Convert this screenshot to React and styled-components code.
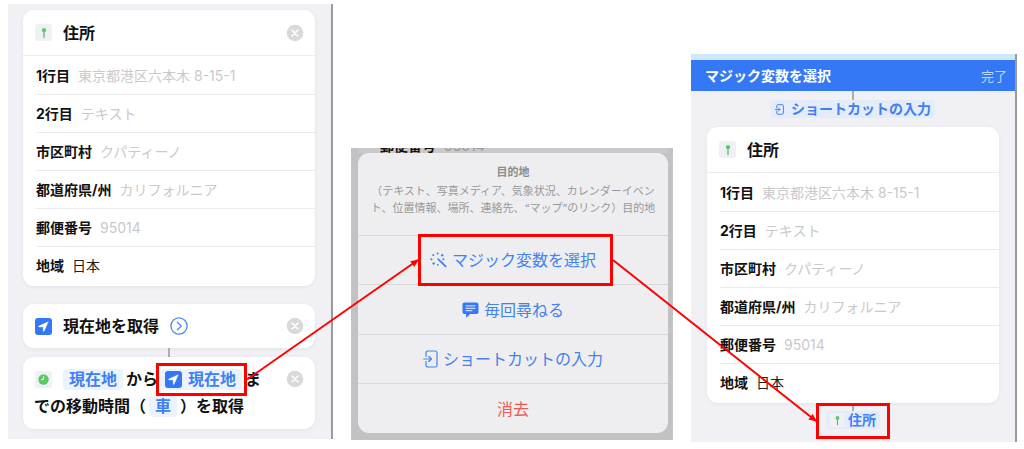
import React, { useLayoutEffect, useRef, useState } from 'react';
import styled, { createGlobalStyle } from 'styled-components';

const GlobalStyle = createGlobalStyle`
    * {
        box-sizing: border-box;
    }

    body {
        margin: 0;
        background: #fff;
        font-family: Inter, "Noto Sans CJK JP", sans-serif;
        font-size: 14px;
        color: #111;
    }

    button, input {
        font: inherit;
        color: inherit;
        border: none;
        background: none;
        padding: 0;
        margin: 0;
    }

    button {
        cursor: pointer;
    }

    svg {
        display: block;
        flex: none;
    }
`;

const Page = styled.main`
    position: relative;
    display: grid;
    grid-template-columns: minmax(0, 325fr) minmax(0, 322fr) minmax(0, 326fr);
    column-gap: 18px;
    align-items: start;
    padding: 0 7px 7px 8px;
`;

const Phone = styled.section`
    margin-top: ${({ $top }) => $top}px;
    background: #f0f0f5;
    border-right: 2px solid #9b9b9f;
`;

const PhoneBody = styled.div`
    display: flex;
    flex-direction: column;
    padding: ${({ $pad }) => $pad};
`;

const Card = styled.div`
    background: #fff;
    border-radius: 11px;
    box-shadow: 0 1px 4px rgba(0, 0, 0, 0.06);
    margin-bottom: ${({ $gap }) => $gap || 0}px;
`;

const CardHeader = styled.div`
    display: flex;
    align-items: center;
    gap: 11px;
    height: ${({ $height }) => $height || 44}px;
    padding: 0 11px 0 12px;
    border-bottom: ${({ $line }) => ($line ? '1px solid #ececef' : 'none')};
`;

const CardTitle = styled.h2`
    margin: 0;
    font-size: 16px;
    line-height: 24px;
    font-weight: 700;
`;

const CloseButton = styled.button`
    margin-left: auto;
    flex: none;
`;

const Fields = styled.div`
    padding: 1px 0 1px 13px;
`;

const Field = styled.div`
    display: flex;
    align-items: center;
    gap: 8px;
    height: 38px;
    border-bottom: 1px solid #ebebed;

    &:last-child {
        border-bottom: none;
    }
`;

const FieldLabel = styled.label`
    flex: none;
    font-weight: 700;
    line-height: 20px;
`;

const FieldInput = styled.input`
    flex: 1;
    min-width: 0;
    height: 20px;
    line-height: 20px;
    outline: none;
    color: #222;

    &::placeholder {
        color: #c9c9cb;
        opacity: 1;
    }
`;

const IconTile = styled.span`
    display: inline-flex;
    align-items: center;
    justify-content: center;
    flex: none;
    width: ${({ $size }) => $size || 17}px;
    height: ${({ $size }) => $size || 17}px;
    border-radius: 3px;
    background: ${({ $blue }) => ($blue ? '#3478f6' : '#f1f1f5')};
`;

const Connector = styled.div`
    width: 2px;
    height: ${({ $height }) => $height || 9}px;
    margin: 0 auto;
    background: #aeaeb2;
`;

const ActionRow = styled.div`
    display: flex;
    align-items: flex-start;
    gap: 18px;
    padding: 9px 11px 9px 11px;

    ${CloseButton} {
        margin-top: 4px;
    }
`;

const Sentence = styled.p`
    flex: 1;
    margin: 0;
    font-size: 16px;
    line-height: 27px;
    font-weight: 700;

    & > ${IconTile} {
        vertical-align: top;
        margin: 5px 11px 0 1px;
    }
`;

const Token = styled.button`
    position: relative;
    display: inline-flex;
    align-items: center;
    gap: 6px;
    height: 21px;
    line-height: 21px;
    padding: 0 6px 0 ${({ $icon }) => ($icon ? 4 : 6)}px;
    margin: 3px 3px 3px ${({ $first }) => ($first ? 0 : 3)}px;
    border-radius: 4px;
    background: #edf3fe;
    color: #3f80f3;
    vertical-align: top;
`;

const Sheet = styled.div`
    border-radius: 11px;
    background: #eeeef0;
`;

const DimPhone = styled.section`
    margin-top: 148px;
    padding: 0 5px 7px 7px;
    background: #c2c2c5;
`;

const Behind = styled.div`
    display: flex;
    align-items: flex-end;
    gap: 8px;
    height: 5px;
    padding-left: 22px;
    overflow: hidden;
    line-height: 15px;
    background: #c9c9cb;
    color: #999;

    strong {
        color: #111;
    }
`;

const SheetHeader = styled.div`
    padding: 11px 11px 18px;
    text-align: center;
    font-size: 11px;
    line-height: 17px;
    color: #98989b;

    h3 {
        margin: 0 0 2px;
        font-size: 11px;
        line-height: 17px;
        font-weight: 700;
        color: #8b8b8e;
    }

    p {
        margin: 0;
    }
`;

const SheetButton = styled.button`
    display: flex;
    align-items: center;
    justify-content: center;
    width: 100%;
    height: ${({ $height }) => $height || 49}px;
    border-top: 1px solid #d9d9dc;
    font-size: 16px;
    color: ${({ $danger }) => ($danger ? '#ea5a55' : '#4583ec')};
`;

const SheetLabel = styled.span`
    position: relative;
    display: flex;
    align-items: center;
    gap: 5px;
    line-height: 24px;
`;

const StatusStrip = styled.div`
    height: 6px;
    background: #cfe9fb;
`;

const NavBar = styled.header`
    display: flex;
    align-items: center;
    justify-content: space-between;
    height: 31px;
    padding: 0 8px 0 14px;
    background: #3478f6;
    color: #fff;

    h1 {
        margin: 0;
        font-size: 14px;
        line-height: 20px;
        font-weight: 700;
    }

    button {
        font-size: 13px;
        line-height: 20px;
        color: #bcd6ff;
    }
`;

const Variable = styled.button`
    position: relative;
    display: flex;
    align-items: center;
    align-self: center;
    gap: ${({ $gap }) => $gap}px;
    height: 18px;
    padding: 0 4px;
    margin-bottom: ${({ $bottom }) => $bottom || 0}px;
    border-radius: 4px;
    background: #e4ecfa;
    color: #3f80f3;
    font-weight: 700;
    line-height: 18px;
`;

const Highlight = styled.span`
    position: absolute;
    inset: ${({ $inset }) => $inset};
    border: 3px solid #fe0000;
    pointer-events: none;
    z-index: 1;
`;

const ArrowLayer = styled.svg`
    position: absolute;
    inset: 0;
    width: 100%;
    height: 100%;
    overflow: visible;
    pointer-events: none;
    z-index: 2;
`;

const PinIcon = ({ size = 12 }) => (
    <svg width={size} height={size} viewBox="0 0 12 12" aria-hidden="true">
        <path d="M6 4v6.500" stroke="#6fae7b" strokeWidth="1.3" strokeLinecap="round" />
        <circle cx="6" cy="3.2" r="2.1" fill="#55ce63" />
    </svg>
);

const ClockIcon = () => (
    <svg width="11" height="11" viewBox="0 0 11 11" aria-hidden="true">
        <circle cx="5.5" cy="5.5" r="5.2" fill="#5cc964" />
        <path d="M5.5 2.6v3H3.4" fill="none" stroke="#fff" strokeWidth="0.9" strokeLinecap="round" />
    </svg>
);

const LocationIcon = () => (
    <svg width="17" height="17" viewBox="0 0 17 17" aria-hidden="true">
        <path d="M13.3 3.7 9 13.2c-.2.4-.8.3-.8-.2V8.9H4c-.5 0-.6-.6-.2-.8z" fill="#fff" stroke="#fff" strokeWidth="0.4" strokeLinejoin="round" />
    </svg>
);

const CloseIcon = () => (
    <svg width="18" height="18" viewBox="0 0 18 18" aria-hidden="true">
        <circle cx="9" cy="9" r="8.3" fill="#d9d9db" />
        <path d="m6 6 6 6m0-6-6 6" stroke="#fff" strokeWidth="1.5" strokeLinecap="round" />
    </svg>
);

const DiscloseIcon = () => (
    <svg width="18" height="18" viewBox="0 0 18 18" fill="none" stroke="#4b8af2" strokeWidth="1.3" strokeLinecap="round" strokeLinejoin="round" aria-hidden="true">
        <circle cx="9" cy="9" r="8.1" />
        <path d="M7.3 5.2 11.4 9l-4.1 3.8" />
    </svg>
);

const WandIcon = () => (
    <svg width="17" height="16" viewBox="0 0 17 16" aria-hidden="true">
        <path d="m8.2 7.2 1.5 1.5" stroke="#4583ec" strokeWidth="1.7" strokeLinecap="round" />
        <path d="m10.6 9.4 5 5" stroke="#4583ec" strokeWidth="1.9" strokeLinecap="round" />
        <g fill="#4583ec">
            <circle cx="3.3" cy="3" r="1.1" />
            <circle cx="7.7" cy="1.5" r="1.1" />
            <circle cx="12.2" cy="3.2" r="1.2" />
            <circle cx="1.4" cy="7.3" r="1.1" />
            <circle cx="13.4" cy="7.3" r="1" />
            <circle cx="3.7" cy="11.5" r="1.2" />
            <circle cx="7.8" cy="12.8" r="0.9" />
        </g>
    </svg>
);

const AskIcon = () => (
    <svg width="17" height="16" viewBox="0 0 17 16" aria-hidden="true">
        <path d="M2.8.5h11.4c1.4 0 2.3.9 2.3 2.3v7c0 1.4-.9 2.3-2.3 2.3H8.2L4.9 15.3c-.4.4-.8.2-.8-.3v-2.9H2.8C1.4 12.1.5 11.2.5 9.8v-7C.5 1.4 1.4.5 2.8.5z" fill="#3478f6" />
        <path d="M4 3.9h9M4 6.3h9M4 8.7h6" stroke="#e8effc" strokeWidth="1" strokeLinecap="round" />
    </svg>
);

const InputIcon = ({ width = 15, height = 18, stroke = 1.2 }) => (
    <svg width={width} height={height} viewBox="0 0 15 18" fill="none" stroke="#4583ec" strokeWidth={stroke} strokeLinecap="round" strokeLinejoin="round" aria-hidden="true">
        <path d="M3 6.5V2.8C3 1.6 3.7 1 4.8 1h7.400c1.100 0 1.800.6 1.800 1.800v12.400c0 1.200-.7 1.800-1.800 1.800H4.800C3.700 17 3 16.400 3 15.200v-3.700" />
        <path d="M.8 9h7.400M5.900 6.500 8.400 9l-2.500 2.500" />
    </svg>
);

const fields = [
    { key: 'line1', label: '1行目', placeholder: '東京都港区六本木 8-15-1' },
    { key: 'line2', label: '2行目', placeholder: 'テキスト' },
    { key: 'city', label: '市区町村', placeholder: 'クパティーノ' },
    { key: 'state', label: '都道府県/州', placeholder: 'カリフォルニア' },
    { key: 'zip', label: '郵便番号', placeholder: '95014' },
    { key: 'country', label: '地域', value: '日本' },
];

function Close({ label }) {
    return (
        <CloseButton type="button" aria-label={label}>
            <CloseIcon />
        </CloseButton>
    );
}

function AddressCard({ id, closable, gap }) {
    return (
        <Card $gap={gap}>
            <CardHeader $line $height={46}>
                <IconTile><PinIcon /></IconTile>
                <CardTitle>住所</CardTitle>
                {closable && <Close label="住所を削除" />}
            </CardHeader>
            <Fields>
                {fields.map(({ key, label, placeholder, value }) => (
                    <Field key={key}>
                        <FieldLabel htmlFor={`${id}-${key}`}>{label}</FieldLabel>
                        <FieldInput id={`${id}-${key}`} placeholder={placeholder} defaultValue={value} />
                    </Field>
                ))}
            </Fields>
        </Card>
    );
}

// each arrow runs from the right edge of one highlight to the left edge of the next
function useArrows(page, from, via, to) {
    const [lines, setLines] = useState([]);

    useLayoutEffect(() => {
        const measure = () => {
            const base = page.current.getBoundingClientRect();
            const [a, b, c] = [from, via, to].map((ref) => {
                const r = ref.current.getBoundingClientRect();
                return { left: r.left - base.left, right: r.right - base.left, y: r.top - base.top + r.height / 2 };
            });
            setLines([
                [a.right, a.y, b.left, b.y],
                [b.right, b.y, c.left, c.y],
            ]);
        };
        measure();
        const observer = new ResizeObserver(measure);
        observer.observe(page.current);
        return () => observer.disconnect();
    }, [page, from, via, to]);

    return lines;
}

function Arrows({ lines }) {
    return (
        <ArrowLayer aria-hidden="true">
            <defs>
                <marker id="head" markerUnits="userSpaceOnUse" markerWidth="8" markerHeight="8" refX="7" refY="4" orient="auto">
                    <path d="M0 .5 8 4 0 7.500z" fill="#fe0000" />
                </marker>
            </defs>
            {lines.map(([x1, y1, x2, y2]) => (
                <line key={x1} x1={x1} y1={y1} x2={x2} y2={y2} stroke="#fe0000" strokeWidth="2" markerEnd="url(#head)" />
            ))}
        </ArrowLayer>
    );
}

export default function App() {
    const page = useRef(null);
    const destination = useRef(null);
    const magic = useRef(null);
    const address = useRef(null);
    const lines = useArrows(page, destination, magic, address);

    return (
        <>
            <GlobalStyle />
            <Page ref={page}>
                <Phone $top={4}>
                    <PhoneBody $pad="6px 16px 10px 15px">
                        <AddressCard id="edit" closable gap={18} />
                        <Card>
                            <CardHeader>
                                <IconTile $blue><LocationIcon /></IconTile>
                                <CardTitle>現在地を取得</CardTitle>
                                <button type="button" aria-label="詳細を表示"><DiscloseIcon /></button>
                                <Close label="現在地を取得を削除" />
                            </CardHeader>
                        </Card>
                        <Connector />
                        <Card>
                            <ActionRow>
                                <Sentence>
                                    <IconTile><ClockIcon /></IconTile>
                                    <Token type="button" $first>現在地</Token>
                                    から
                                    <Token type="button" $icon>
                                        <IconTile $blue><LocationIcon /></IconTile>
                                        現在地
                                        <Highlight ref={destination} $inset="-6px -5px" />
                                    </Token>
                                    までの移動時間（
                                    <Token type="button">車</Token>
                                    ）を取得
                                </Sentence>
                                <Close label="移動時間を取得を削除" />
                            </ActionRow>
                        </Card>
                    </PhoneBody>
                </Phone>

                <DimPhone>
                    <Behind aria-hidden="true"><strong>郵便番号</strong>95014</Behind>
                    <Sheet>
                        <SheetHeader>
                            <h3>目的地</h3>
                            <p>（テキスト、写真メディア、気象状況、カレンダーイベント、位置情報、場所、連絡先、“マップ”のリンク）目的地</p>
                        </SheetHeader>
                        <SheetButton type="button">
                            <SheetLabel>
                                <WandIcon />
                                マジック変数を選択
                                <Highlight ref={magic} $inset="-14px -17px -14px -12px" />
                            </SheetLabel>
                        </SheetButton>
                        <SheetButton type="button" $height={50}>
                            <SheetLabel><AskIcon />毎回尋ねる</SheetLabel>
                        </SheetButton>
                        <SheetButton type="button">
                            <SheetLabel><InputIcon />ショートカットの入力</SheetLabel>
                        </SheetButton>
                        <SheetButton type="button" $danger $height={50}>
                            <SheetLabel>消去</SheetLabel>
                        </SheetButton>
                    </Sheet>
                </DimPhone>

                <Phone $top={54}>
                    <StatusStrip />
                    <NavBar>
                        <h1>マジック変数を選択</h1>
                        <button type="button">完了</button>
                    </NavBar>
                    <PhoneBody $pad="0 16px 13px 16px">
                        <Connector />
                        <Variable type="button" $gap={7} $bottom={9}>
                            <InputIcon width={9} height={11} stroke={1.6} />
                            ショートカットの入力
                        </Variable>
                        <AddressCard id="pick" />
                        <Connector $height={8} />
                        <Variable type="button" $gap={4}>
                            <IconTile $size={14}><PinIcon size={11} /></IconTile>
                            住所
                            <Highlight ref={address} $inset="-8px -10px -10px" />
                        </Variable>
                    </PhoneBody>
                </Phone>
                <Arrows lines={lines} />
            </Page>
        </>
    );
}
